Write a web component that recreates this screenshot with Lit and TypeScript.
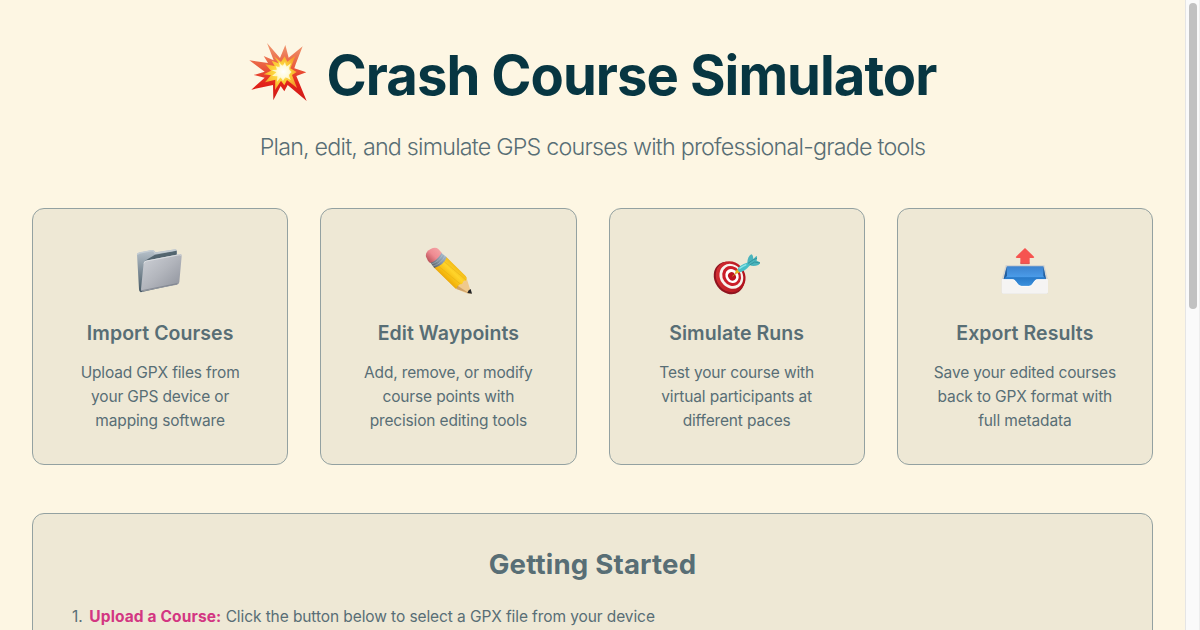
import { LitElement, html, css } from "lit";
import { customElement } from "lit/decorators.js";

const burst = html`<svg class="burst" viewBox="30 24 180 180">
  <defs><linearGradient id="b" x1="0" y1="0" x2="0" y2="1"><stop offset="0" stop-color="#ef9a72"/><stop offset=".42" stop-color="#ea5a3c"/><stop offset=".7" stop-color="#e3231a"/><stop offset="1" stop-color="#ce1b17"/></linearGradient>
  <radialGradient id="y" cx=".5" cy=".48" r=".55"><stop offset="0" stop-color="#ffe84a"/><stop offset=".6" stop-color="#fbc834"/><stop offset="1" stop-color="#f59b2d"/></radialGradient>
  <radialGradient id="w"><stop offset="0" stop-color="#fff"/><stop offset=".6" stop-color="#fffbe0"/><stop offset="1" stop-color="#fff" stop-opacity="0"/></radialGradient></defs>
  <path fill="url(#b)" d="M84 27L123 72L139 33L149 71L191 37L170 91L166 103L202 115L172 126L203 201L146 153L136 172L125 156L103 199L102 153L37 167L77 131L44 123L77 113L31 79L87 87L74 66L104 79Z"/>
  <path fill="url(#y)" d="M104 66L126 84L137 67L145 83L169 65L158 94L154 103L173 114L159 123L174 162L144 138L136 154L126 140L108 168L109 137L78 145L96 124L74 121L96 110L79 91L107 96L98 80L119 88Z"/>
  <path fill="#fff6bd" d="M119 83L131 97L138 84L142 98L156 88L149 106L158 114L149 122L155 138L139 129L132 141L125 130L114 143L115 127L99 126L112 115L97 108L114 107L110 96L124 101Z"/>
  <circle cx="133" cy="113" r="23" fill="url(#w)"/></svg>`;

const folder = html`<svg class="icon" viewBox="0 0 210 198">
  <defs><linearGradient id="f" x1="0" y1="0" x2="1" y2="1"><stop stop-color="#d0d3d9"/><stop offset=".5" stop-color="#b2b5bc"/><stop offset="1" stop-color="#8b8f99"/></linearGradient><linearGradient id="k" x1="0" y1="0" x2="0" y2="1"><stop stop-color="#b9c3cc"/><stop offset="1" stop-color="#465965"/></linearGradient></defs>
  <path d="M36 55Q37 51 42 50L80 42Q86 41 92 49L151 40Q156 40 156 46V145L47 169Q42 168 42 160Z" fill="url(#k)"/>
  <path d="M90 56L155 44V56L60 74Z" fill="#53656f"/>
  <path d="M37 56Q39 52 43 51L80 44Q86 43 90 52L151 42" fill="none" stroke="#c5cdd3" stroke-width="4"/>
  <path d="M56 81Q57 75 64 74L165 54Q171 53 170 61L163 138Q162 144 156 146L54 166Q48 167 48 160Z" fill="url(#f)"/>
  <path d="M57 82Q58 76 65 75L165 56L169 59" fill="none" stroke="#e0e2e5" stroke-width="2.5"/>
  <path d="M51 164L157 143" stroke="#737984" stroke-width="2"/></svg>`;

const pencil = html`<svg class="icon" viewBox="-5 0 210 198">
  <defs><linearGradient id="p" x1="0" y1="1" x2="1" y2="0"><stop offset=".2" stop-color="#d98b0a"/><stop offset=".4" stop-color="#f5b90f"/><stop offset=".55" stop-color="#ffd42a"/><stop offset=".8" stop-color="#e9a80c"/></linearGradient><linearGradient id="m" x1="0" y1="1" x2="1" y2="0"><stop stop-color="#4b5057"/><stop offset=".5" stop-color="#8795a3"/><stop offset="1" stop-color="#a9c3da"/></linearGradient><linearGradient id="r" x1="0" y1="1" x2="1" y2="0"><stop stop-color="#a93f46"/><stop offset=".5" stop-color="#ef8b92"/><stop offset="1" stop-color="#f5aaaa"/></linearGradient></defs>
  <path d="M57 94L94 62L155 124L167 162L169 173L160 173L125 159Z" fill="#efc98d"/>
  <path d="M57 94L94 62L153 120Q159 127 154 134Q147 131 145 139Q144 146 137 144Q130 147 128 155L123 158Z" fill="url(#p)"/>
  <path d="M66 86L137 144M83 72L154 132" stroke="#d69c0b" stroke-width="1.4" opacity=".6"/>
  <path d="M125 159L129 149L161 170L168 173Z" fill="#bb8850" opacity=".6"/>
  <path d="M168 159L172 173L158 171Q160 162 168 159Z" fill="#252628"/>
  <path d="M46 79Q63 75 78 49L96 64Q88 87 59 96Z" fill="url(#m)"/>
  <path d="M50 84Q73 78 84 55M55 90Q79 84 91 60" fill="none" stroke="#d4dce1" stroke-width="2" opacity=".5"/>
  <path d="M34 62Q31 48 48 39Q62 32 71 39L81 50Q68 74 46 81Q39 75 34 62Z" fill="url(#r)"/></svg>`;

const target = html`<svg class="icon" viewBox="1 0 210 198">
  <defs><linearGradient id="t" x1="0" y1="0" x2="1" y2="1"><stop stop-color="#d93336"/><stop offset="1" stop-color="#a90c19"/></linearGradient></defs>
  <ellipse cx="82" cy="126" rx="43" ry="51" transform="rotate(-35 82 126)" fill="#8f1420"/>
  <ellipse cx="87" cy="122" rx="43" ry="48" transform="rotate(-35 87 122)" fill="url(#t)"/>
  <ellipse cx="89" cy="121" rx="34" ry="39" transform="rotate(-35 89 121)" fill="#f7f2ed"/>
  <ellipse cx="90" cy="120" rx="27" ry="31" transform="rotate(-35 90 120)" fill="#cb1d29"/>
  <ellipse cx="91" cy="120" rx="19" ry="22" transform="rotate(-35 91 120)" fill="#fff"/>
  <ellipse cx="91" cy="121" rx="11" ry="13" transform="rotate(-35 91 121)" fill="#bd1420"/>
  <path d="M92 121L113 104" stroke="#c98916" stroke-width="3"/>
  <path d="M100 111Q101 103 108 99L115 108Q108 114 100 111Z" fill="#e5b51e"/>
  <path d="M108 100Q111 91 126 84L140 79L145 88Q131 105 116 109Q109 107 108 100Z" fill="#47bfc7"/>
  <path d="M137 80Q138 61 149 55Q154 56 155 69L164 60Q168 60 165 74L175 79Q177 83 170 87Q155 93 143 87Z" fill="#4ab4bc"/>
  <path d="M139 82L155 71L166 67M144 87L159 78L175 81" stroke="#25838f" stroke-width="2" fill="none"/>
  <path d="M113 98Q123 91 134 86" stroke="#8ce4e7" stroke-width="4" fill="none"/></svg>`;

const outbox = html`<svg class="icon" viewBox="0 0 210 198">
  <defs><linearGradient id="o" x1="0" y1="0" x2="0" y2="1"><stop stop-color="#3c82ce"/><stop offset=".5" stop-color="#4a9be8"/><stop offset=".55" stop-color="#287ac9"/><stop offset="1" stop-color="#3d93df"/></linearGradient></defs>
  <path d="M47 87H163L174 130V170Q174 173 170 173H39Q35 173 35 169V130Z" fill="#d4d3cf"/>
  <path d="M51 91H160L168 130L150 153H58L41 130Z" fill="url(#o)"/>
  <path d="M50 91L41 130L51 120ZM160 91L168 130L160 120Z" fill="#245e9c"/>
  <path d="M35 130H68C79 130 81 150 95 150H116C130 150 131 130 142 130H174V169Q174 173 170 173H39Q35 173 35 169Z" fill="#f5f4f3"/>
  <path d="M36 131H68C79 131 81 151 95 151H116C130 151 131 131 142 131H173" fill="none" stroke="#fff" stroke-width="2"/>
  <path d="M105 36L132 62Q134 66 129 66H119V80Q119 83 115 83H95Q91 83 91 80V66H81Q76 66 78 62Z" fill="#f65450"/>
  <path d="M92 80V83H118V80" fill="none" stroke="#d43d3d" stroke-width="2"/></svg>`;

const cards = [
  { icon: folder, title: "Import Courses", lines: ["Upload GPX files from", "your GPS device or", "mapping software"] },
  { icon: pencil, title: "Edit Waypoints", lines: ["Add, remove, or modify", "course points with", "precision editing tools"] },
  { icon: target, title: "Simulate Runs", lines: ["Test your course with", "virtual participants at", "different paces"] },
  { icon: outbox, title: "Export Results", lines: ["Save your edited courses", "back to GPX format with", "full metadata"] },
];

@customElement("app-root")
export class AppRoot extends LitElement {
  static styles = css`
    :host { display: flex; height: 630px; overflow: hidden; background: #fdf6e3; color: #586e75; font-family: Inter, sans-serif; }
    * { box-sizing: border-box; margin: 0; }
    main { width: 1185px; padding: 0 32px; }
    svg { display: block; }
    header { height: 208px; padding-top: 42px; }
    h1 { display: flex; justify-content: center; gap: 18px; height: 67px; line-height: 67px; font-size: 54.4px; font-weight: 700; letter-spacing: -0.0175em; color: #073642; white-space: nowrap; }
    .burst { width: 60px; height: 60px; }
    .sub { margin-top: 20px; text-align: center; font-size: 23.3px; line-height: 36px; font-weight: 300; letter-spacing: -0.034em; }
    .grid { display: grid; grid-template-columns: repeat(4, 1fr); gap: 32px; }
    .card { height: 257px; padding: 27px 16px 0; border: 1px solid #93a1a1; border-radius: 12px; background: #eee8d5; text-align: center; }
    .icon { width: 70px; height: 66px; margin: 0 auto; }
    h2 { margin-top: 17px; font-size: 19.5px; line-height: 28px; font-weight: 600; letter-spacing: 0.003em; }
    .card p { margin-top: 14px; font-size: 15.5px; line-height: 24px; letter-spacing: -0.01em; }
    .line { display: block; white-space: nowrap; }
    .start { margin-top: 48px; height: 300px; padding: 32px 39px; border: 1px solid #93a1a1; border-radius: 12px; background: #eee8d5; }
    .start h3 { text-align: center; font-size: 27.6px; line-height: 36px; font-weight: 700; letter-spacing: 0.007em; }
    .step { margin-top: 22px; font-size: 15.5px; line-height: 26px; letter-spacing: -0.006em; }
    .num { display: inline-block; width: 13px; }
    .step b { color: #d33682; font-weight: 700; letter-spacing: 0.008em; }
    .track { width: 15px; padding: 3px 2px 0 3px; border-left: 1px solid #e5e5e5; border-right: 1px solid #ededed; background: #fafafa; }
    .thumb { width: 8px; height: 306px; border-radius: 4px; background: #c1c1c1; }
  `;

  render() {
    return html`<main>
        <header>
          <h1>${burst}<span>Crash Course Simulator</span></h1>
          <p class="sub">Plan, edit, and simulate GPS courses with professional-grade tools</p>
        </header>
        <section class="grid">
          ${cards.map((c) => html`<article class="card">${c.icon}<h2>${c.title}</h2><p>${c.lines.map((l) => html`<span class="line">${l}</span>`)}</p></article>`)}
        </section>
        <section class="start">
          <h3>Getting Started</h3>
          <p class="step"><span class="num">1.</span> <b>Upload a Course:</b> Click the button below to select a GPX file from your device</p>
        </section>
      </main>
      <div class="track"><div class="thumb"></div></div>`;
  }
}
